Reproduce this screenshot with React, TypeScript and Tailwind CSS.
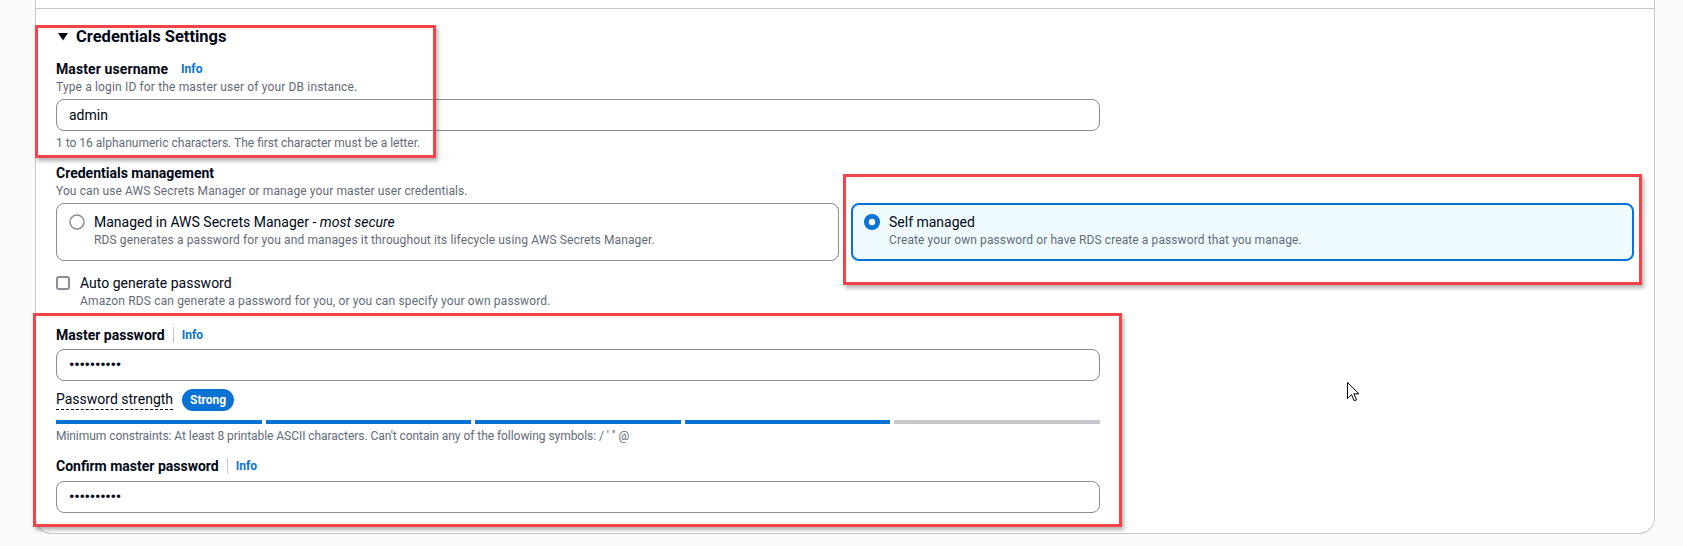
import React from "react";

function InfoLink() {
  return <span className="text-[12px] leading-[16px] font-bold text-[#0972d3]">Info</span>;
}

function Sep() {
  return <span className="mx-[8px] h-[16px] w-px bg-[#c6c6cd]" />;
}

function RadioOff() {
  return (
    <svg width="16" height="16" viewBox="0 0 16 16" className="shrink-0">
      <circle cx="8" cy="8" r="7" fill="white" stroke="#8c8c94" strokeWidth="1.5" />
    </svg>
  );
}

function RadioOn() {
  return (
    <svg width="16" height="16" viewBox="0 0 16 16" className="shrink-0">
      <circle cx="8" cy="8" r="8" fill="#0972d3" />
      <circle cx="8" cy="8" r="3.2" fill="white" />
    </svg>
  );
}

export default function App() {
  const segs = [true, true, true, true, false];
  return (
    <div className="relative w-[1683px] h-[546px] overflow-hidden bg-[#fafafa] font-[Roboto,Arial,sans-serif] text-[#000716]">
      <div className="ml-[35px] w-[1620px] bg-white border-x border-b border-[#c6c6cd] rounded-b-[16px]">
        <div className="h-[8px]" />
        <div className="border-t border-[#c6c6cd] px-[20px] pt-[16px] pb-[20px] flex flex-col">
          {/* header */}
          <div className="flex items-center h-[24px]">
            <svg width="10" height="8" viewBox="0 0 10 8" className="ml-[2px] mr-[8px]">
              <polygon points="0,0 10,0 5,7.5" fill="#000716" />
            </svg>
            <span className="text-[16.5px] leading-[24px] font-bold">Credentials Settings</span>
          </div>

          {/* Master username */}
          <div className="mt-[10px] flex items-center h-[20px] gap-[13px]">
            <span className="text-[14px] leading-[20px] font-bold tracking-[0.1px]">Master username</span>
            <InfoLink />
          </div>
          <div className="text-[12px] leading-[16px] text-[#5f6b7a] tracking-[0.15px]">Type a login ID for the master user of your DB instance.</div>
          <div className="mt-[4px] w-[1044px] h-[32px] border border-[#8c8c94] rounded-[8px] px-[12px] flex items-center text-[14px]">
            admin
          </div>
          <div className="mt-[4px] text-[12px] leading-[16px] text-[#5f6b7a]">1 to 16 alphanumeric characters. The first character must be a letter.</div>

          {/* Credentials management */}
          <div className="mt-[12px] text-[14px] leading-[20px] font-bold">Credentials management</div>
          <div className="text-[12px] leading-[16px] text-[#5f6b7a] tracking-[0.1px]">You can use AWS Secrets Manager or manage your master user credentials.</div>
          <div className="mt-[4px] grid grid-cols-2 gap-[12px]">
            <div className="h-[58px] border border-[#8c8c94] rounded-[8px] pl-[12px] pt-[8px] flex gap-[9px]">
              <div className="pt-[2px]"><RadioOff /></div>
              <div>
                <div className="text-[14px] leading-[20px]">
                  Managed in AWS Secrets Manager - <i>most secure</i>
                </div>
                <div className="text-[12px] leading-[16px] text-[#5f6b7a] tracking-[0.12px]">RDS generates a password for you and manages it throughout its lifecycle using AWS Secrets Manager.</div>
              </div>
            </div>
            <div className="h-[58px] border-2 border-[#0972d3] bg-[#f0fbff] rounded-[8px] pl-[11px] pt-[7px] flex gap-[9px]">
              <div className="pt-[2px]"><RadioOn /></div>
              <div>
                <div className="text-[14px] leading-[20px]">Self managed</div>
                <div className="text-[12px] leading-[16px] text-[#5f6b7a] tracking-[0.1px]">Create your own password or have RDS create a password that you manage.</div>
              </div>
            </div>
          </div>

          {/* Auto generate */}
          <div className="mt-[12px] flex gap-[10px]">
            <div className="mt-[3px] w-[14px] h-[14px] border-2 border-[#8c8c94] rounded-[3px] bg-white shrink-0" />
            <div>
              <div className="text-[14px] leading-[20px]">Auto generate password</div>
              <div className="text-[12px] leading-[16px] text-[#5f6b7a] tracking-[0.15px]">Amazon RDS can generate a password for you, or you can specify your own password.</div>
            </div>
          </div>

          {/* Master password */}
          <div className="mt-[16px] flex items-center h-[20px]">
            <span className="text-[14px] leading-[20px] font-bold">Master password</span>
            <Sep />
            <InfoLink />
          </div>
          <div className="mt-[4px] w-[1044px] h-[32px] border border-[#8c8c94] rounded-[8px] px-[12px] flex items-center text-[15px] font-bold tracking-[-0.2px]">
            ••••••••••
          </div>
          <div className="mt-[8px] flex items-center h-[22px] gap-[9px]">
            <span className="text-[14px] leading-[19px] border-b border-dashed border-[#000716]">Password strength</span>
            <span className="h-[22px] px-[8px] rounded-full bg-[#0972d3] text-white text-[12px] font-bold flex items-center">Strong</span>
          </div>
          <div className="mt-[9px] w-[1044px] flex gap-[4px]">
            {segs.map((on, i) => (
              <div key={i} className={on ? "flex-1 h-[4px] bg-[#0972d3]" : "flex-1 h-[4px] bg-[#c6c6cd]"} />
            ))}
          </div>
          <div className="mt-[4px] text-[12px] leading-[16px] text-[#5f6b7a] tracking-[-0.05px]">Minimum constraints: At least 8 printable ASCII characters. Can't contain any of the following symbols: / ' " @</div>

          {/* Confirm */}
          <div className="mt-[12px] flex items-center h-[20px]">
            <span className="text-[14px] leading-[20px] font-bold">Confirm master password</span>
            <Sep />
            <InfoLink />
          </div>
          <div className="mt-[5px] w-[1044px] h-[32px] border border-[#8c8c94] rounded-[8px] px-[12px] flex items-center text-[15px] font-bold tracking-[-0.2px]">
            ••••••••••
          </div>
        </div>
      </div>

      {/* annotation boxes */}
      <div className="absolute left-[35px] top-[25px] w-[401px] h-[133px] border-[3px] border-[#f0444a] shadow-[2px_3px_4px_rgba(0,0,0,0.3)]" />
      <div className="absolute left-[843px] top-[174px] w-[799px] h-[111px] border-[3px] border-[#f0444a] shadow-[2px_3px_4px_rgba(0,0,0,0.3)]" />
      <div className="absolute left-[33px] top-[313px] w-[1089px] h-[214px] border-[3px] border-[#f0444a] shadow-[2px_3px_4px_rgba(0,0,0,0.3)]" />

      {/* cursor */}
      <svg className="absolute left-[1347px] top-[382px]" width="13" height="20" viewBox="0 0 13 20">
        <path d="M0.5 0.5 L0.5 16.5 L4.5 12.7 L7.2 18.8 L9.5 17.8 L6.9 11.8 L12 11.8 Z" fill="white" stroke="black" strokeWidth="1" strokeLinejoin="miter" />
      </svg>
    </div>
  );
}
